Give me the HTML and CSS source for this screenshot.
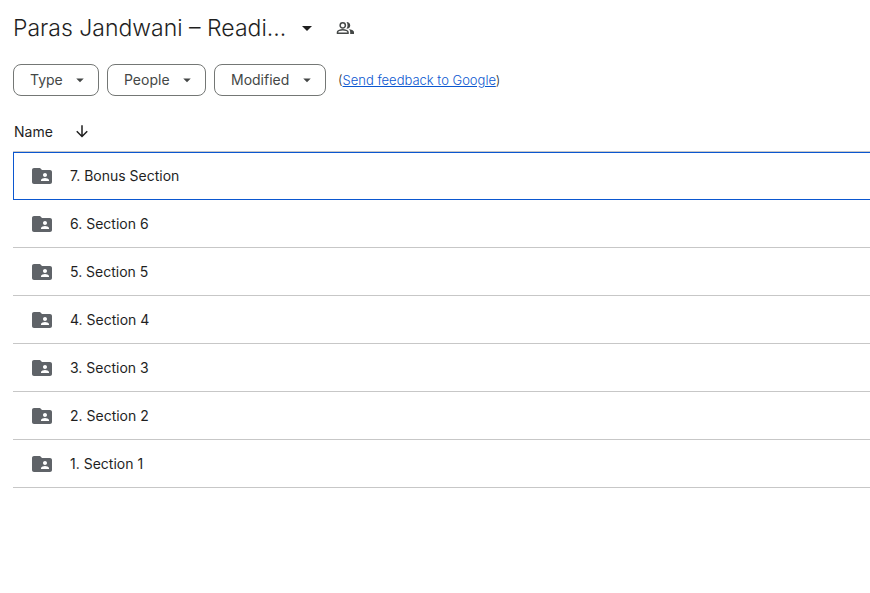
FILE: index.html
```html
<!DOCTYPE html>
<html lang="en">
<head>
    <meta charset="UTF-8">
    <meta name="viewport" content="width=device-width, initial-scale=1.0">
    <title>Paras Jandwani – Readi...</title>
    <link rel="stylesheet" href="styles.css">
</head>
<body>
    <svg width="0" height="0" class="sprite" aria-hidden="true">
        <symbol id="caret" viewBox="0 0 24 24"><path d="M7 10l5 5 5-5z"/></symbol>
        <symbol id="folder-shared" viewBox="0 0 24 24">
            <path d="M20 6h-8l-2-2H4c-1.100 0-1.990.9-1.990 2L2 18c0 1.100.9 2 2 2h16c1.100 0 2-.9 2-2V8c0-1.100-.9-2-2-2zm-5 3c1.100 0 2 .9 2 2s-.9 2-2 2-2-.9-2-2 .9-2 2-2zm4 8h-8v-1c0-1.330 2.670-2 4-2s4 .67 4 2v1z"/>
        </symbol>
    </svg>

    <header class="header">
        <h1 class="title">
            <button type="button" class="title-button">
                <span>Paras Jandwani – Readi...</span>
                <svg class="title-caret"><use href="#caret"/></svg>
            </button>
        </h1>
        <button type="button" class="share" aria-label="Manage people">
            <svg class="share-icon" viewBox="0 0 24 24">
                <path d="M9 5a3.500 3.500 0 1 0 0 7 3.500 3.500 0 0 0 0-7z" fill="none" stroke="currentColor" stroke-width="2"/>
                <path d="M2 19v-1.600C2 15.500 6 14.300 9 14.300s7 1.200 7 3.100V19z" fill="none" stroke="currentColor" stroke-width="2"/>
                <path d="M14 13c3 0 5-1.900 5-4.500S17 4 14 4c.9 1.200 1.400 2.700 1.400 4.500S14.900 11.800 14 13z"/>
                <path d="M17 13.300c1.200 1 1.900 2.300 1.900 4.100V20H24v-2.600c0-2.300-3.800-3.600-7-4.100z"/>
            </svg>
        </button>
    </header>

    <div class="filters">
        <div class="chip">
            <select aria-label="Type"><option>Type</option></select>
            <svg class="chip-caret"><use href="#caret"/></svg>
        </div>
        <div class="chip">
            <select aria-label="People"><option>People</option></select>
            <svg class="chip-caret"><use href="#caret"/></svg>
        </div>
        <div class="chip">
            <select aria-label="Modified"><option>Modified</option></select>
            <svg class="chip-caret"><use href="#caret"/></svg>
        </div>
        <span class="feedback">(<a href="#">Send feedback to Google</a>)</span>
    </div>

    <table class="files">
        <thead>
            <tr>
                <th colspan="2" scope="col">
                    <div class="sort">
                        <span>Name</span>
                        <button type="button" class="sort-button" aria-label="Reverse sort direction">
                            <svg class="sort-icon" viewBox="0 0 24 24"><path d="M12 3v15M5 11l7 7 7-7"/></svg>
                        </button>
                    </div>
                </th>
            </tr>
        </thead>
        <tbody>
            <tr class="selected">
                <td class="icon"><svg class="folder"><use href="#folder-shared"/></svg></td>
                <td>7. Bonus Section</td>
            </tr>
            <tr>
                <td class="icon"><svg class="folder"><use href="#folder-shared"/></svg></td>
                <td>6. Section 6</td>
            </tr>
            <tr>
                <td class="icon"><svg class="folder"><use href="#folder-shared"/></svg></td>
                <td>5. Section 5</td>
            </tr>
            <tr>
                <td class="icon"><svg class="folder"><use href="#folder-shared"/></svg></td>
                <td>4. Section 4</td>
            </tr>
            <tr>
                <td class="icon"><svg class="folder"><use href="#folder-shared"/></svg></td>
                <td>3. Section 3</td>
            </tr>
            <tr>
                <td class="icon"><svg class="folder"><use href="#folder-shared"/></svg></td>
                <td>2. Section 2</td>
            </tr>
            <tr>
                <td class="icon"><svg class="folder"><use href="#folder-shared"/></svg></td>
                <td>1. Section 1</td>
            </tr>
        </tbody>
    </table>
</body>
</html>
```
FILE: styles.css
```css
* {
    box-sizing: border-box;
}
body {
    margin: 0;
    padding: 8px 0 0 13px;
    background-color: #fff;
    color: #1f1f1f;
    font-family: Inter, Roboto, sans-serif;
    font-size: 14px;
    line-height: 20px;
}
button {
    padding: 0;
    border: none;
    background: none;
    color: inherit;
    font: inherit;
    cursor: pointer;
}
svg {
    display: block;
    fill: currentColor;
}
.sprite {
    position: absolute;
}

/* Title bar */
.header {
    display: flex;
    align-items: center;
    gap: 17px;
    height: 40px;
}
.title {
    margin: 0;
    font-size: 23px;
    line-height: 32px;
    font-weight: 300;
}
.title-button {
    display: flex;
    align-items: center;
    gap: 9px;
}
.title-caret {
    width: 24px;
    height: 24px;
}
.share-icon {
    width: 18px;
    height: 18px;
    color: #444746;
}

/* Filter chips */
.filters {
    display: flex;
    align-items: center;
    gap: 8px;
    margin-top: 16px;
}
.chip {
    position: relative;
    color: #444746;
}
.chip select {
    appearance: none;
    display: block;
    height: 32px;
    padding: 0 35px 0 16px;
    border: 1px solid #747775;
    border-radius: 8px;
    background: none;
    color: inherit;
    font: inherit;
    cursor: pointer;
}
.chip-caret {
    position: absolute;
    top: 7px;
    right: 10px;
    width: 18px;
    height: 18px;
    pointer-events: none;
}
.feedback {
    margin-left: 4px;
    font-size: 13px;
    font-weight: 300;
}
.feedback a {
    color: #0b57d0;
}

/* File list */
.files {
    width: 100%;
    margin-top: 16px;
    border-collapse: separate;
    border-spacing: 0;
}
.files th {
    height: 40px;
    padding: 0 1px;
    border-bottom: 1px solid #c7c7c7;
    font-weight: 400;
    text-align: left;
}
.sort {
    display: flex;
    align-items: center;
    gap: 20px;
}
.sort-icon {
    width: 18px;
    height: 18px;
    fill: none;
    stroke: currentColor;
    stroke-width: 2;
}
.files td {
    height: 48px;
    padding: 0;
    border-bottom: 1px solid #c7c7c7;
}
.files .icon {
    width: 57px;
    padding-left: 17px;
}
.files .selected td {
    border-top: 1px solid #0b57d0;
    border-bottom: 1px solid #0b57d0;
}
.files .selected .icon {
    padding-left: 16px;
    border-left: 1px solid #0b57d0;
}
.folder {
    width: 24px;
    height: 24px;
    color: #5f6368;
}
```
